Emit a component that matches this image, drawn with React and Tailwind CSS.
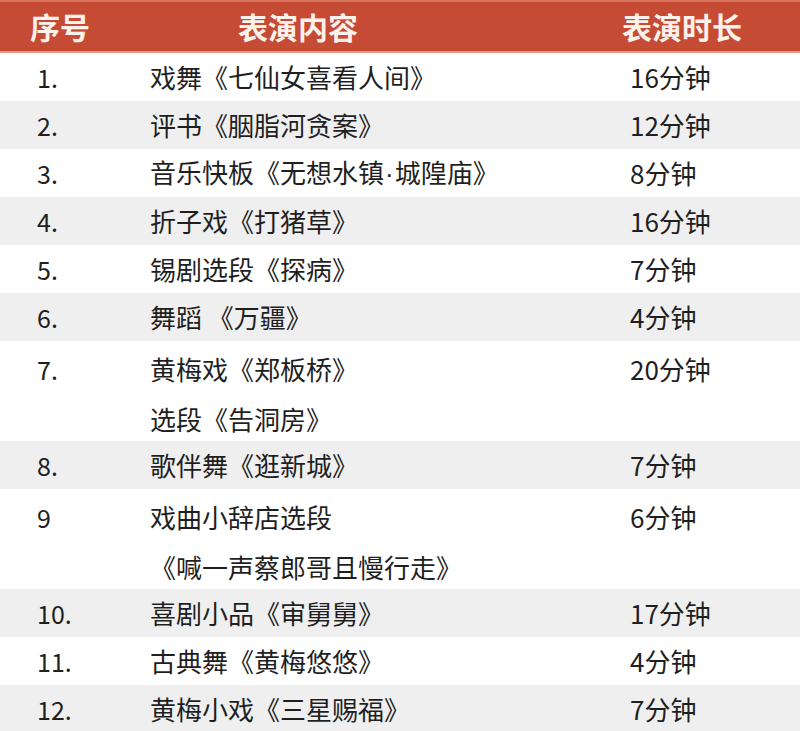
const rows = [
  { no: "1.", name: ["戏舞《七仙女喜看人间》"], time: "16分钟" },
  { no: "2.", name: ["评书《胭脂河贪案》"], time: "12分钟" },
  { no: "3.", name: [["音乐快板《无想水镇", "城隍庙》"]], time: "8分钟" },
  { no: "4.", name: ["折子戏《打猪草》"], time: "16分钟" },
  { no: "5.", name: ["锡剧选段《探病》"], time: "7分钟" },
  { no: "6.", name: ["舞蹈 《万疆》"], time: "4分钟" },
  { no: "7.", name: ["黄梅戏《郑板桥》", "选段《告洞房》"], time: "20分钟" },
  { no: "8.", name: ["歌伴舞《逛新城》"], time: "7分钟" },
  { no: "9", name: ["戏曲小辞店选段", "《喊一声蔡郎哥且慢行走》"], time: "6分钟" },
  { no: "10.", name: ["喜剧小品《审舅舅》"], time: "17分钟" },
  { no: "11.", name: ["古典舞《黄梅悠悠》"], time: "4分钟" },
  { no: "12.", name: ["黄梅小戏《三星赐福》"], time: "7分钟" },
];

export default function App() {
  return (
    <div
      className="w-[800px] h-[731px] bg-white text-[#1f1f1f] overflow-hidden"
      style={{ fontFamily: '"Noto Sans CJK SC", "Noto Sans", sans-serif' }}
    >
      {/* 表头 */}
      <div className="h-[53px] bg-[#c64b34] border-t-2 border-[#d8735e] border-b-2 border-b-[#e59a88] flex items-center text-[30px] font-bold text-[#fdf1ec]">
        <div className="w-[238px] pl-[30px]">序号</div>
        <div className="w-[384px]">表演内容</div>
        <div>表演时长</div>
      </div>

      {/* 节目列表 */}
      {rows.map((r, idx) => {
        const double = r.name.length > 1;
        return (
          <div
            key={idx}
            className={
              "flex " +
              (idx % 2 === 1 ? "bg-[#efefef] " : "bg-white ") +
              (double ? "h-[100px] pt-[3px]" : "h-[48px] items-center")
            }
          >
            <div className="w-[150px] pl-[37px] text-[25px] leading-[50px]">{r.no}</div>
            <div className="w-[480px] text-[26px] leading-[50px]">
              {r.name.map((line, i) => (
                <div key={i} className="whitespace-nowrap">
                  {Array.isArray(line) ? (
                    <>
                      {line[0]}
                      <span className="font-['Liberation_Sans',sans-serif] px-[1px]">·</span>
                      {line[1]}
                    </>
                  ) : (
                    line
                  )}
                </div>
              ))}
            </div>
            <div className="text-[26px] leading-[50px]">{r.time}</div>
          </div>
        );
      })}
    </div>
  );
}
